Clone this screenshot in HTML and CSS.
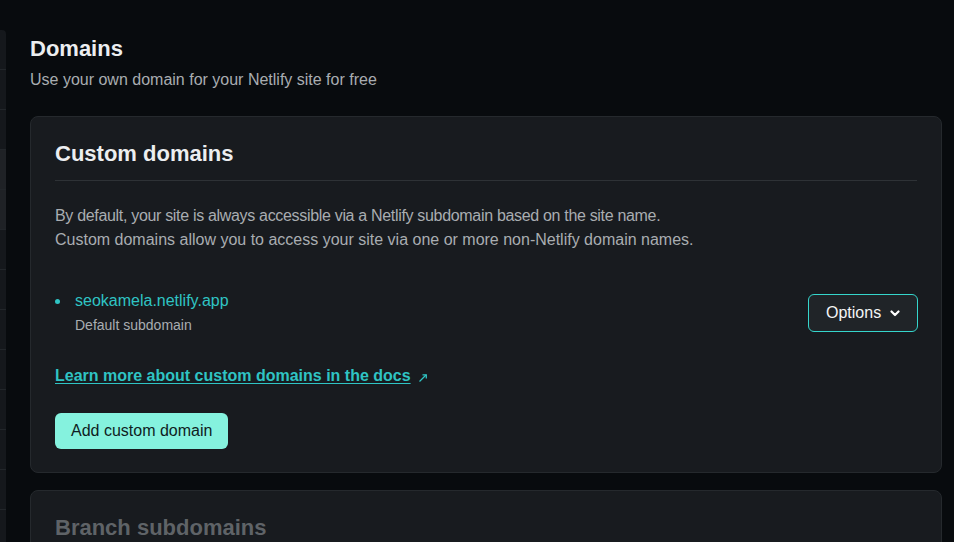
FILE: index.html
```html
<!DOCTYPE html>
<html lang="en">
<head>
<meta charset="utf-8">
<title>Domains</title>
<link rel="stylesheet" href="styles.css">
</head>
<body>
<div class="layout">
  <nav class="sidebar">
    <div class="nav-item"></div>
    <div class="nav-item"></div>
    <div class="nav-item"></div>
    <div class="nav-item active"></div>
    <div class="nav-item active"></div>
    <div class="nav-item"></div>
    <div class="nav-item"></div>
    <div class="nav-item"></div>
    <div class="nav-item"></div>
    <div class="nav-item"></div>
    <div class="nav-item"></div>
    <div class="nav-item"></div>
    <div class="nav-item"></div>
  </nav>
  <main class="main">
    <h1 class="page-title">Domains</h1>
    <p class="page-sub">Use your own domain for your Netlify site for free</p>

    <section class="card">
      <h2 class="card-title">Custom domains</h2>
      <p class="card-text"><span class="tight">By default, your site is always accessible via a Netlify subdomain based on the site name.</span><br>Custom domains allow you to access your site via one or more non-Netlify domain names.</p>

      <div class="domain-row">
        <div class="domain-info">
          <div class="domain-line"><span class="dot"></span><a class="domain-link" href="#">seokamela.netlify.app</a></div>
          <div class="domain-sub">Default subdomain</div>
        </div>
        <button class="btn-options">Options
          <svg class="chev" width="10" height="7" viewBox="0 0 10 7"><path d="M1.5 1.5 L5 5 L8.5 1.5" fill="none" stroke="#ffffff" stroke-width="2.2" stroke-linecap="round" stroke-linejoin="round"/></svg>
        </button>
      </div>

      <p class="docs"><a class="docs-link" href="#">Learn more about custom domains in the docs</a>
        <svg class="ext" width="10" height="10" viewBox="0 0 10 10"><path d="M1.5 8.5 L8 2" stroke="#2fc4c4" stroke-width="1.3" fill="none"/><path d="M4.5 1.8 H8.3 V5.6" stroke="#2fc4c4" stroke-width="1.3" fill="none"/></svg>
      </p>

      <button class="btn-primary">Add custom domain</button>
    </section>

    <section class="card card-dim">
      <h2 class="card-title dim">Branch subdomains</h2>
    </section>
  </main>
</div>
</body>
</html>
```

FILE: styles.css
```css
* { box-sizing: border-box; }
html, body {
  margin: 0;
  padding: 0;
  background: #080b0e;
  height: 100%;
  overflow: hidden;
}
body {
  font-family: "Liberation Sans", Arial, sans-serif;
  color: #e6e8ea;
}
.layout {
  display: flex;
  height: 542px;
}
.sidebar {
  width: 6px;
  flex: 0 0 6px;
  margin-top: 30px;
  background: #15181c;
  border-top-right-radius: 4px;
  display: flex;
  flex-direction: column;
  overflow: hidden;
}
.nav-item {
  height: 40px;
  flex: 0 0 40px;
  border-bottom: 1px solid #22262a;
}
.nav-item.active {
  background: #1f2226;
}
.main {
  flex: 1;
  padding: 35px 12px 0 24px;
  min-width: 0;
}
.page-title {
  margin: 0;
  font-size: 22px;
  line-height: 28px;
  font-weight: 700;
  color: #eceef0;
}
.page-sub {
  margin: 5px 0 0;
  font-size: 16px;
  line-height: 24px;
  color: #a9adb1;
}
.card {
  margin-top: 24px;
  background: #181b1f;
  border: 1px solid #25292d;
  border-radius: 8px;
  padding: 23px 24px;
}
.card + .card { margin-top: 17px; }
.card-title {
  margin: 0;
  font-size: 22px;
  line-height: 28px;
  font-weight: 700;
  color: #eceef0;
  padding-bottom: 12px;
  border-bottom: 1px solid #2e3236;
}
.card-title.dim {
  color: #5f6367;
  border-bottom: none;
}
.card-text {
  margin: 23px 0 0;
  font-size: 16px;
  line-height: 24px;
  color: #a9adb1;
}
.tight { letter-spacing: -0.32px; }
.domain-row {
  margin-top: 36px;
  display: flex;
  align-items: center;
  justify-content: space-between;
}
.domain-line {
  display: flex;
  align-items: center;
  line-height: 24px;
  padding-top: 1px;
}
.dot {
  width: 5px;
  height: 5px;
  border-radius: 50%;
  background: #2fc4c4;
  margin: 0 15px 0 0;
}
.domain-link {
  font-size: 16px;
  color: #2fc4c4;
  text-decoration: none;
}
.domain-sub {
  margin-top: 2px;
  padding-left: 20px;
  font-size: 14px;
  line-height: 20px;
  color: #a9adb1;
}
.btn-options {
  height: 38px;
  width: 110px;
  margin-top: 3px;
  margin-right: -1px;
  display: flex;
  align-items: center;
  gap: 9px;
  padding: 0 0 0 17px;
  background: #202428;
  border: 1px solid #35d6cc;
  border-radius: 6px;
  font-family: inherit;
  font-size: 16px;
  color: #f4f5f6;
}
.chev { display: block; }
.docs {
  margin: 29px 0 0;
  line-height: 24px;
  display: flex;
  align-items: center;
  gap: 7px;
}
.docs-link {
  font-size: 16px;
  font-weight: 700;
  color: #2fc4c4;
  text-decoration: underline;
  text-underline-offset: 2px;
}
.ext { margin-top: 3px; }
.btn-primary {
  margin-top: 25px;
  height: 36px;
  padding: 0 16px;
  background: #85f2de;
  border: none;
  border-radius: 6px;
  font-family: inherit;
  font-size: 16px;
  color: #0f1d22;
  display: block;
}
.card-dim { padding-bottom: 40px; }
```
